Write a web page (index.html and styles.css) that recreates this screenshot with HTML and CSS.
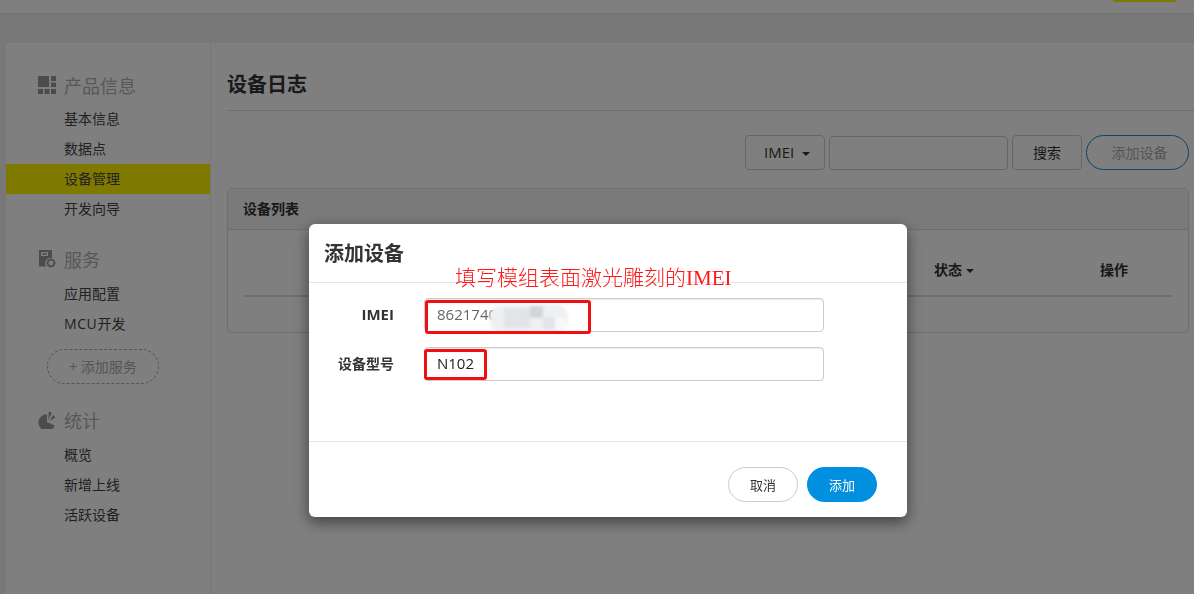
FILE: index.html
```html
<!DOCTYPE html>
<html lang="zh-CN">
<head>
<meta charset="utf-8">
<title>设备日志</title>
<link rel="stylesheet" href="styles.css">
</head>
<body>
<header class="topbar"><span class="top-btn"></span></header>
<div class="shell">
  <aside class="sidebar">
    <section class="group">
      <h3 class="group-title">
        <svg class="group-icon" viewBox="0 0 18 18"><path d="M0 0h11v11H0zM13 0h5v5h-5zM13 6.500h5v4.500h-5zM0 13h5v5H0zM6.500 13h5v5h-5zM13 13h5v5h-5z"/></svg>
        产品信息</h3>
      <a class="nav-item">基本信息</a>
      <a class="nav-item">数据点</a>
      <a class="nav-item active">设备管理</a>
      <a class="nav-item">开发向导</a>
    </section>
    <section class="group">
      <h3 class="group-title">
        <svg class="group-icon" viewBox="0 0 18 18"><path d="M1 0h13v8.500a5 5 0 0 0-5.500 8H1zM3 2v4h7V2zM4.200 3.200h4.600v1.600H4.200z" fill-rule="evenodd"/><circle class="gear" cx="13" cy="13" r="3.300"/><path class="gear-teeth" d="M13 8.400v1.400M13 16.200v1.400M8.400 13h1.400M16.200 13h1.400M9.800 9.800l1 1M15.200 15.200l1 1M9.800 16.200l1-1M15.200 10.800l1-1"/></svg>
        服务</h3>
      <a class="nav-item">应用配置</a>
      <a class="nav-item"><span class="nav-latin">MCU</span>开发</a>
      <button class="add-service">+ 添加服务</button>
    </section>
    <section class="group group-last">
      <h3 class="group-title">
        <svg class="group-icon" viewBox="0 0 18 18"><path d="M9 11V3.200A8.400 8.400 0 1 0 16.800 14.500Z"/><path d="M10.400 9L10.800 0.400L13.800 1.400Z"/><path d="M11.400 10L15.200 4L17.600 6.600Z"/></svg>
        统计</h3>
      <a class="nav-item">概览</a>
      <a class="nav-item">新增上线</a>
      <a class="nav-item">活跃设备</a>
    </section>
  </aside>
  <main class="content">
    <h1 class="page-title">设备日志</h1>
    <div class="toolbar">
      <button class="tool-btn select"><span class="latin">IMEI</span> <i class="caret"></i></button>
      <input class="tool-input" type="text">
      <button class="tool-btn search">搜索</button>
      <button class="tool-btn add-device">添加设备</button>
    </div>
    <section class="panel">
      <div class="panel-head">设备列表</div>
      <div class="panel-body">
        <div class="table-head">
          <span class="col-status">状态<i class="caret"></i></span>
          <span class="col-action">操作</span>
        </div>
      </div>
    </section>
  </main>
</div>
<div class="backdrop"></div>
<div class="modal">
  <div class="modal-head">添加设备</div>
  <form class="modal-body">
    <div class="form-row">
      <label class="form-label latin">IMEI</label>
      <input class="form-input muted" type="text" value="8621740">
    </div>
    <div class="form-row">
      <label class="form-label">设备型号</label>
      <input class="form-input" type="text" value="N102">
    </div>
  </form>
  <div class="modal-foot">
    <button class="pill cancel">取消</button>
    <button class="pill confirm">添加</button>
  </div>
</div>
<div class="note">填写模组表面激光雕刻的<span class="note-latin">IMEI</span></div>
<div class="smudge"><i></i><i></i><i></i><i></i></div>
<div class="mark mark-imei"></div>
<div class="mark mark-model"></div>
</body>
</html>
```
FILE: styles.css
```css
* { box-sizing: border-box; }
html, body { height: 100%; }
body {
  margin: 0;
  overflow: hidden;
  background: #f0f0f0;
  color: #333;
  font: 14px "Open Sans", "Noto Sans CJK SC", sans-serif;
}
button, input { font: inherit; }
.latin { font-size: 15px; }
.nav-latin { letter-spacing: .6px; }

.topbar {
  height: 14px;
  background: #fff;
  border-bottom: 1px solid #e6e6e6;
  display: flex;
  justify-content: flex-end;
  padding-right: 17px;
}
.top-btn {
  width: 64px;
  height: 2px;
  background: #fff200;
  border-radius: 0 0 4px 4px;
}

.shell {
  margin: 29px 0 0 6px;
  height: 560px;
  background: #fff;
  display: flex;
}
.sidebar {
  width: 205px;
  flex: none;
  padding-top: 27px;
  border-right: 1px solid #eee;
}
.group { margin-bottom: 21px; }
.group-last { margin-top: 22px; }
.group-title {
  margin: 0;
  height: 34px;
  padding: 0 0 5px 32px;
  display: flex;
  align-items: center;
  gap: 8px;
  font-size: 18px;
  font-weight: 400;
  color: #b0b0b0;
}
.group + .group .group-title { padding-bottom: 7px; }
.group-icon { width: 18px; height: 18px; fill: #999; flex: none; }
.gear { fill: none; stroke: #999; stroke-width: 1.600; }
.gear-teeth { fill: none; stroke: #999; stroke-width: 1.500; }
.nav-item {
  display: block;
  height: 30px;
  line-height: 30px;
  padding-left: 58px;
  font-size: 14px;
  color: #444;
}
.nav-item.active { background: #fff200; }
.add-service {
  display: block;
  margin: 10px 0 0 41px;
  width: 112px;
  height: 35px;
  padding: 0 0 2px;
  border: 1px dashed #aaa;
  border-radius: 18px;
  background: transparent;
  color: #aaa;
}

.content { flex: 1; padding: 0 5px 0 16px; min-width: 0; }
.page-title {
  margin: 0 -5px 0 0;
  height: 68px;
  padding-top: 23px;
  line-height: 38px;
  font-size: 20px;
  font-weight: 700;
  color: #333;
  border-bottom: 1px solid #ddd;
}
.toolbar {
  margin-top: 24px;
  height: 35px;
  display: flex;
  justify-content: flex-end;
  gap: 4px;
}
.tool-btn {
  padding: 0 0 1px;
  height: 35px;
  background: #fff;
  border: 1px solid #ccc;
  border-radius: 4px;
  color: #333;
}
.select { width: 80px; padding-left: 4px; }
.tool-input {
  width: 179px;
  height: 34px;
  margin-top: 1px;
  border: 1px solid #ccc;
  border-radius: 4px;
  background: #fff;
}
.search { width: 70px; }
.add-device {
  width: 103px;
  padding: 0 0 2px 4px;
  border-color: #0d8fd8;
  border-radius: 18px;
  color: #aaa;
}
.caret {
  display: inline-block;
  width: 0;
  height: 0;
  margin-left: 4px;
  vertical-align: middle;
  border-top: 4px solid #333;
  border-left: 4px solid transparent;
  border-right: 4px solid transparent;
}

.panel {
  margin-top: 18px;
  height: 145px;
  border: 1px solid #ddd;
  border-radius: 4px;
  background: #fff;
}
.panel-head {
  height: 41px;
  line-height: 39px;
  padding-left: 15px;
  background: #f5f5f5;
  border-bottom: 1px solid #ddd;
  font-size: 14px;
  font-weight: 700;
}
.panel-body { padding: 0 15px; }
.table-head {
  height: 67px;
  border-bottom: 2px solid #ddd;
  display: flex;
  align-items: center;
  padding-top: 13px;
  font-size: 14px;
  font-weight: 700;
  justify-content: flex-end;
}
.col-status { width: 166px; }
.col-action { width: 73px; }

.backdrop {
  position: fixed;
  inset: 0;
  background: rgba(0, 0, 0, .5);
}
.modal {
  position: fixed;
  left: 309px;
  top: 224px;
  width: 598px;
  height: 293px;
  background: #fff;
  border-radius: 6px;
  box-shadow: 0 5px 15px rgba(0, 0, 0, .5);
  display: flex;
  flex-direction: column;
}
.modal-head {
  height: 59px;
  padding: 11px 15px 0;
  line-height: 38px;
  border-bottom: 1px solid #e5e5e5;
  font-size: 20px;
  font-weight: 700;
  color: #333;
}
.modal-body {
  flex: none;
  height: 159px;
  margin: 0;
  padding-top: 15px;
  border-bottom: 1px solid #e5e5e5;
  display: flex;
  flex-direction: column;
  gap: 15px;
}
.form-row { display: flex; align-items: center; gap: 30px; }
.form-label {
  width: 85px;
  padding-bottom: 3px;
  text-align: right;
  font-weight: 700;
  color: #333;
}
.form-input {
  width: 400px;
  height: 34px;
  padding: 0 12px 2px;
  border: 1px solid #ccc;
  border-radius: 4px;
  font-size: 15px;
  color: #222;
  box-shadow: inset 0 1px 1px rgba(0, 0, 0, .075);
}
.muted { color: #666; }
.modal-foot {
  flex: 1;
  display: flex;
  justify-content: flex-end;
  align-items: flex-start;
  gap: 9px;
  padding: 25px 30px 0 0;
}
.pill {
  width: 70px;
  height: 35px;
  padding: 0;
  border-radius: 18px;
  border: 1px solid #ccc;
  background: #fff;
  color: #333;
  font-size: 13px;
}
.confirm { background: #0090df; border-color: #0090df; color: #fff; }

.note {
  position: fixed;
  left: 455px;
  top: 262px;
  line-height: 28px;
  font-family: "Noto Sans CJK SC", sans-serif;
  font-size: 21px;
  font-weight: 300;
  color: #ff1a1a;
  white-space: nowrap;
}
.note-latin { font-family: "Liberation Serif", serif; font-weight: 400; }
.mark {
  position: fixed;
  border: 3px solid #f01010;
  border-radius: 3px;
}
.mark-imei { left: 425px; top: 300px; width: 166px; height: 34px; }
.mark-model { left: 424px; top: 349px; width: 63px; height: 31px; }
.smudge {
  position: fixed;
  left: 490px;
  top: 305px;
  width: 78px;
  height: 28px;
  border-radius: 12px;
  background: #eef0f2;
  filter: blur(1.500px);
}
.smudge i { position: absolute; display: block; background: #e2e4e7; }
.smudge i:nth-child(1) { left: 40px; top: 1px; width: 13px; height: 12px; background: #d4d5d6; }
.smudge i:nth-child(2) { left: 14px; top: 3px; width: 26px; height: 20px; }
.smudge i:nth-child(3) { left: 53px; top: 12px; width: 12px; height: 12px; }
.smudge i:nth-child(4) { left: 65px; top: 12px; width: 11px; height: 14px; background: #f6f8fa; }
```
